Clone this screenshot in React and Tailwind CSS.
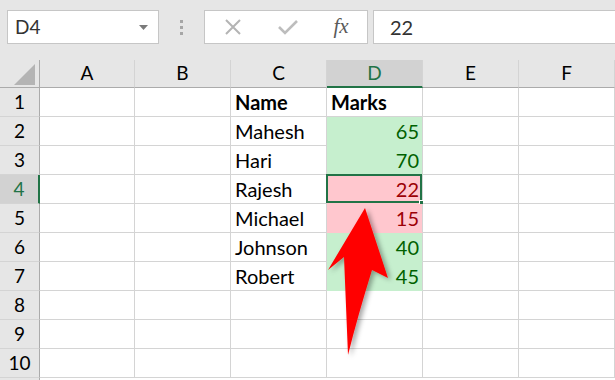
import React from 'react';

const cols = ['A', 'B', 'C', 'D', 'E', 'F'];

const data = {
    1: { C: { v: 'Name', bold: true }, D: { v: 'Marks', bold: true } },
    2: { C: { v: 'Mahesh' }, D: { v: '65', tone: 'good' } },
    3: { C: { v: 'Hari' }, D: { v: '70', tone: 'good' } },
    4: { C: { v: 'Rajesh' }, D: { v: '22', tone: 'bad' } },
    5: { C: { v: 'Michael' }, D: { v: '15', tone: 'bad' } },
    6: { C: { v: 'Johnson' }, D: { v: '40', tone: 'good' } },
    7: { C: { v: 'Robert' }, D: { v: '45', tone: 'good' } },
};

const font = { fontFamily: 'Lato, "Open Sans", sans-serif' };

function Cell({ row, col }) {
    const cell = data[row]?.[col];
    const selected = row === 4 && col === 'D';
    let tone = 'bg-white border-b-[#d4d4d4] text-black';
    if (cell?.tone === 'good') tone = 'bg-[#c6efce] border-b-[#c6efce] text-[#006100]';
    if (cell?.tone === 'bad') tone = 'bg-[#ffc7ce] border-b-[#ffc7ce] text-[#9c0006]';
    const numeric = cell && /^\d+$/.test(cell.v);

    return (
        <div className={`relative h-[29px] border-r border-b border-r-[#d4d4d4] ${tone} flex items-center text-[20px] ${numeric ? 'justify-end pr-[3px]' : 'pl-[4px]'}`}>
            {cell && <span className={cell.bold ? 'font-bold' : ''}>{cell.v}</span>}
            {selected && (
                <>
                    <div className="absolute -left-[1px] -top-[1px] right-0 bottom-0 border-2 border-[#217346]" />
                    <div className="absolute -right-[4px] -bottom-[4px] w-[7px] h-[7px] bg-[#217346] border border-white" />
                </>
            )}
        </div>
    );
}

function App() {
    const rows = Array.from({ length: 10 }, (_, i) => i + 1);

    return (
        <div className="relative w-[615px] h-[380px] overflow-hidden bg-[#e6e6e6]" style={font}>
            {/* formula bar */}
            <div className="h-[60px] flex items-start pt-[10px] pl-[7px]">
                <div className="w-[152px] h-[34px] bg-white border border-[#c6c6c6] flex items-center justify-between pl-[7px] pr-[10px]">
                    <span className="text-[19px] text-[#333]">D4</span>
                    <svg width="9" height="5" viewBox="0 0 9 5"><path d="M0 0 L9 0 L4.5 5 Z" fill="#7a7a7a" /></svg>
                </div>
                <div className="w-[45px] h-[34px] flex flex-col items-center justify-center gap-[3px]">
                    <span className="w-[3px] h-[3px] bg-[#a6a6a6]" />
                    <span className="w-[3px] h-[3px] bg-[#a6a6a6]" />
                    <span className="w-[3px] h-[3px] bg-[#a6a6a6]" />
                </div>
                <div className="w-[164px] h-[34px] bg-white border border-[#c6c6c6] flex items-center">
                    <div className="w-[56px] flex justify-center">
                        <svg width="16" height="16" viewBox="0 0 16 16"><path d="M1 1 L15 15 M15 1 L1 15" stroke="#b4b4b4" strokeWidth="2" /></svg>
                    </div>
                    <div className="w-[54px] flex justify-center">
                        <svg width="20" height="16" viewBox="0 0 20 16"><path d="M1 8 L7 14 L19 2" stroke="#bdbdbd" strokeWidth="2.6" fill="none" /></svg>
                    </div>
                    <div className="w-[52px] flex justify-center">
                        <span className="italic text-[21px] text-[#5a5a5a]" style={{ fontFamily: '"Liberation Serif", serif' }}>fx</span>
                    </div>
                </div>
                <div className="ml-[5px] flex-1 h-[34px] bg-white border border-[#c6c6c6] border-r-0 flex items-center pl-[16px]">
                    <span className="text-[20px] text-[#333]">22</span>
                </div>
            </div>

            {/* grid */}
            <div className="grid grid-cols-[40px_95px_96px_96px_96px_96px_1fr] bg-white">
                <div className="h-[28px] bg-[#e6e6e6] border-r border-b border-r-[#ababab] border-b-[#ababab] flex items-end justify-end pr-[3px] pb-[2px]">
                    <svg width="22" height="21" viewBox="0 0 22 21"><path d="M21 0 L21 21 L0 21 Z" fill="#b4b4b4" /></svg>
                </div>
                {cols.map((c) => (
                    <div
                        key={c}
                        className={`h-[28px] flex items-center justify-center text-[19px] border-r border-r-[#d4d4d4] ${c === 'D' ? 'bg-[#d2d2d2] text-[#217346] border-b-2 border-b-[#217346]' : 'bg-[#e6e6e6] text-black border-b border-b-[#ababab]'}`}
                    >
                        {c}
                    </div>
                ))}
                {rows.map((r) => (
                    <React.Fragment key={r}>
                        <div className={`h-[29px] flex items-center justify-center text-[19px] border-b border-b-[#d4d4d4] ${r === 4 ? 'bg-[#d2d2d2] text-[#217346] border-r-2 border-r-[#217346]' : 'bg-[#e6e6e6] text-black border-r border-r-[#ababab]'}`}>
                            {r}
                        </div>
                        {cols.map((c) => (
                            <Cell key={c} row={r} col={c} />
                        ))}
                    </React.Fragment>
                ))}
            </div>
            <div className="grid grid-cols-[40px_1fr] h-[10px]">
                <div className="bg-[#e6e6e6] border-r border-r-[#ababab]" />
                <div className="bg-white" />
            </div>

            {/* red arrow callout */}
            <svg className="absolute left-0 top-0 pointer-events-none" width="615" height="380" viewBox="0 0 615 380">
                <defs>
                    <filter id="shadow" x="-50%" y="-20%" width="200%" height="140%">
                        <feDropShadow dx="3" dy="2" stdDeviation="2.5" floodColor="#000" floodOpacity="0.35" />
                    </filter>
                </defs>
                <path d="M365 208 L388 278 L372 270 Q358 315 348 355 L344 257 L328 270 Z" fill="#ff0000" filter="url(#shadow)" />
            </svg>
        </div>
    );
}

export default App;
